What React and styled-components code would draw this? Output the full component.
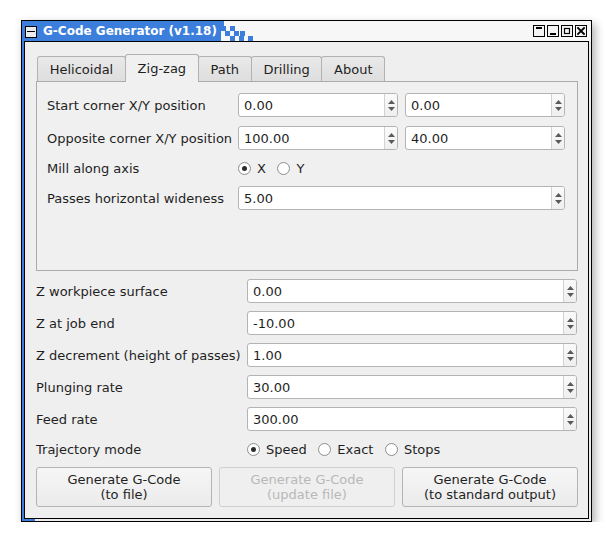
import React from 'react';
import styled, { createGlobalStyle } from 'styled-components';

const GlobalStyle = createGlobalStyle`
  body {
    margin: 0;
    background: #ffffff;
    font-family: "DejaVu Sans", "Liberation Sans", sans-serif;
    font-size: 13px;
    color: #1f1f1f;
  }
`;

const BLUE = '#3b7edc';

const Page = styled.div`
  padding: 20px 0 0 21px;
`;

const Window = styled.div`
  width: 571px;
  height: 502px;
  box-sizing: border-box;
  border: 1px solid #000;
  display: flex;
  flex-direction: column;
  box-shadow: 3px 4px 9px rgba(0, 0, 0, 0.32);
  background:
    linear-gradient(${BLUE}, ${BLUE}) left bottom / 13px 2px no-repeat,
    linear-gradient(to right, ${BLUE} 2px, #ececec 2px);
`;

const TitleBar = styled.div`
  height: 20px;
  display: flex;
  align-items: stretch;
  background: #f7f7f7;
`;

const TitleActive = styled.div`
  width: 199px;
  display: flex;
  align-items: center;
  gap: 6px;
  padding-left: 3px;
  box-sizing: border-box;
  background: ${BLUE};
`;

const MenuBox = styled.div`
  width: 12px;
  height: 12px;
  box-sizing: border-box;
  border: 1px solid #000;
  background: #ececec;
  display: flex;
  align-items: center;
  justify-content: center;
  margin-top: 1px;

  &::before {
    content: "";
    width: 8px;
    height: 1px;
    background: #000;
  }
`;

const TitleText = styled.span`
  color: #ffffff;
  font-weight: bold;
  font-size: 12px;
  white-space: nowrap;
`;

const TitleFill = styled.div`
  flex: 1;
`;

const TitleButtons = styled.div`
  display: flex;
  align-items: center;
  gap: 2px;
  padding-right: 4px;
`;

const TitleButton = styled.div`
  width: 12px;
  height: 12px;
  box-sizing: border-box;
  border: 1px solid #000;
  background: #f4f4f4;
  display: flex;
  svg { display: block; }
`;

const Body = styled.div`
  flex: 1;
  margin: 0 2px 2px 2px;
  border: 1px solid #000;
  background: #efefef;
  padding: 12px 10px 10px 11px;
  display: flex;
  flex-direction: column;
  gap: 8px;
`;

const TabWidget = styled.div`
  display: flex;
  flex-direction: column;
`;

const TabBar = styled.div`
  height: 28px;
  display: flex;
  align-items: flex-end;
  padding-left: 1px;
  margin-bottom: -1px;
  position: relative;
  z-index: 1;
`;

const Tab = styled.div`
  box-sizing: border-box;
  height: ${p => (p.$active ? '28px' : '25px')};
  margin-bottom: ${p => (p.$active ? '0' : '1px')};
  margin-left: -1px;
  padding: 0 11.7px;
  display: flex;
  align-items: center;
  padding-top: ${p => (p.$active ? '0' : '1px')};
  border: 1px solid #b2b2b2;
  border-bottom: none;
  border-radius: 3px 3px 0 0;
  background: ${p => (p.$active ? '#f0f0f0' : 'linear-gradient(#e9e9e9, #dedede)')};
  color: #1f1f1f;
  white-space: nowrap;

  &:first-child { margin-left: 0; }
`;

const TabPane = styled.div`
  height: 190px;
  box-sizing: border-box;
  border: 1px solid #ababab;
  background: #f0f0f0;
  padding: 11px 11px 0 10px;
`;

const PaneGrid = styled.div`
  display: grid;
  grid-template-columns: 184px 160px 160px;
  grid-template-rows: 24px 24px 18px 24px;
  column-gap: 7px;
  row-gap: 9px;
`;

const FormLabel = styled.div`
  display: flex;
  align-items: center;
  white-space: nowrap;
`;

const SpinFrame = styled.div`
  grid-column: ${p => p.$span || 'auto'};
  height: 24px;
  box-sizing: border-box;
  border: 1px solid #b4b4b4;
  border-radius: 3px;
  background: #ffffff;
  display: flex;
  overflow: hidden;
`;

const SpinValue = styled.div`
  flex: 1;
  display: flex;
  align-items: center;
  padding-left: 5px;
  color: #1f1f1f;
`;

const SpinArrows = styled.div`
  width: 12px;
  border-left: 1px solid #d2d2d2;
  background: linear-gradient(#fafafa, #efefef);
  display: flex;
  flex-direction: column;
  justify-content: center;
  align-items: center;
  gap: 3px;
  svg { display: block; }
`;

const RadioGroup = styled.div`
  grid-column: ${p => p.$span || 'auto'};
  display: flex;
  align-items: center;
  gap: 11.5px;
`;

const RadioItem = styled.label`
  display: flex;
  align-items: center;
  gap: 6px;
  white-space: nowrap;
`;

const RadioMark = styled.span`
  width: 13px;
  height: 13px;
  box-sizing: border-box;
  border-radius: 50%;
  border: 1px solid #8f8f8f;
  background: radial-gradient(circle, #ffffff 60%, #f0f0f0 100%);
  display: flex;
  align-items: center;
  justify-content: center;

  &::after {
    content: "";
    width: 5px;
    height: 5px;
    border-radius: 50%;
    background: ${p => (p.$checked ? '#2c2c2c' : 'transparent')};
  }
`;

const LowerForm = styled.div`
  display: grid;
  grid-template-columns: 204px 1fr;
  grid-auto-rows: 24px;
  column-gap: 7px;
  row-gap: 8px;
  margin-right: 1px;
`;

const TrajectoryRow = styled.div`
  display: grid;
  grid-template-columns: 204px 1fr;
  column-gap: 7px;
  height: 20px;
`;

const ButtonRow = styled.div`
  display: grid;
  grid-template-columns: 1fr 1fr 1fr;
  column-gap: 7px;
`;

const PushButton = styled.button`
  height: 40px;
  box-sizing: border-box;
  border: 1px solid ${p => (p.disabled ? '#cfcfcf' : '#b4b4b4')};
  border-radius: 3px;
  background: ${p => (p.disabled ? '#efefef' : 'linear-gradient(#f6f6f6, #ebebeb)')};
  color: ${p => (p.disabled ? '#b8b8b8' : '#1f1f1f')};
  font-family: "DejaVu Sans", "Liberation Sans", sans-serif;
  font-size: 13px;
  line-height: 15px;
  padding: 0;
`;

const Dither = () => (
  <svg width="33" height="20" viewBox="0 0 33 20">
    <rect x="0" y="0" width="3" height="5" fill={BLUE} />
    <rect x="0" y="5" width="5" height="5" fill={BLUE} />
    <rect x="9" y="5" width="5" height="5" fill={BLUE} />
    <rect x="4" y="10" width="5" height="5" fill={BLUE} />
    <rect x="13" y="10" width="5" height="5" fill={BLUE} />
    <rect x="19" y="10" width="5" height="5" fill={BLUE} />
    <rect x="9" y="15" width="5" height="5" fill={BLUE} />
    <rect x="18" y="15" width="5" height="5" fill={BLUE} />
    <rect x="27" y="15" width="5" height="5" fill={BLUE} />
  </svg>
);

const Glyph = ({ kind }) => (
  <svg width="10" height="10" viewBox="0 0 10 10">
    {kind === 'shade' && <rect x="2" y="1" width="6" height="2" fill="#000" />}
    {kind === 'min' && <rect x="2" y="7" width="6" height="2" fill="#000" />}
    {kind === 'max' && <rect x="2.5" y="2.5" width="5" height="5" fill="none" stroke="#000" strokeWidth="1.2" />}
    {kind === 'close' && (
      <path d="M2 2 L8 8 M8 2 L2 8" stroke="#000" strokeWidth="1.8" strokeLinecap="square" />
    )}
  </svg>
);

const Arrow = ({ up }) => (
  <svg width="7" height="4" viewBox="0 0 7 4">
    <path d={up ? 'M0 4 L3.5 0 L7 4 Z' : 'M0 0 L7 0 L3.5 4 Z'} fill="#5a5a5a" />
  </svg>
);

const SpinBox = ({ value, span }) => (
  <SpinFrame $span={span}>
    <SpinValue>{value}</SpinValue>
    <SpinArrows>
      <Arrow up />
      <Arrow />
    </SpinArrows>
  </SpinFrame>
);

const Radio = ({ label, checked }) => (
  <RadioItem>
    <RadioMark $checked={checked} />
    {label}
  </RadioItem>
);

const tabs = ['Helicoidal', 'Zig-zag', 'Path', 'Drilling', 'About'];

const zRows = [
  ['Z workpiece surface', '0.00'],
  ['Z at job end', '-10.00'],
  ['Z decrement (height of passes)', '1.00'],
  ['Plunging rate', '30.00'],
  ['Feed rate', '300.00'],
];

export default function App() {
  return (
    <Page>
      <GlobalStyle />
      <Window>
        <TitleBar>
          <TitleActive>
            <MenuBox />
            <TitleText>G-Code Generator (v1.18)</TitleText>
          </TitleActive>
          <Dither />
          <TitleFill />
          <TitleButtons>
            <TitleButton><Glyph kind="shade" /></TitleButton>
            <TitleButton><Glyph kind="min" /></TitleButton>
            <TitleButton><Glyph kind="max" /></TitleButton>
            <TitleButton><Glyph kind="close" /></TitleButton>
          </TitleButtons>
        </TitleBar>

        <Body>
          <TabWidget>
            <TabBar>
              {tabs.map(t => (
                <Tab key={t} $active={t === 'Zig-zag'}>{t}</Tab>
              ))}
            </TabBar>
            <TabPane>
              <PaneGrid>
                <FormLabel>Start corner X/Y position</FormLabel>
                <SpinBox value="0.00" />
                <SpinBox value="0.00" />

                <FormLabel>Opposite corner X/Y position</FormLabel>
                <SpinBox value="100.00" />
                <SpinBox value="40.00" />

                <FormLabel>Mill along axis</FormLabel>
                <RadioGroup $span="2 / 4">
                  <Radio label="X" checked />
                  <Radio label="Y" />
                </RadioGroup>

                <FormLabel>Passes horizontal wideness</FormLabel>
                <SpinBox value="5.00" span="2 / 4" />
              </PaneGrid>
            </TabPane>
          </TabWidget>

          <LowerForm>
            {zRows.map(([label, value]) => (
              <React.Fragment key={label}>
                <FormLabel>{label}</FormLabel>
                <SpinBox value={value} />
              </React.Fragment>
            ))}
          </LowerForm>

          <TrajectoryRow>
            <FormLabel>Trajectory mode</FormLabel>
            <RadioGroup>
              <Radio label="Speed" checked />
              <Radio label="Exact" />
              <Radio label="Stops" />
            </RadioGroup>
          </TrajectoryRow>

          <ButtonRow>
            <PushButton>Generate G-Code<br />(to file)</PushButton>
            <PushButton disabled>Generate G-Code<br />(update file)</PushButton>
            <PushButton>Generate G-Code<br />(to standard output)</PushButton>
          </ButtonRow>
        </Body>
      </Window>
    </Page>
  );
}
